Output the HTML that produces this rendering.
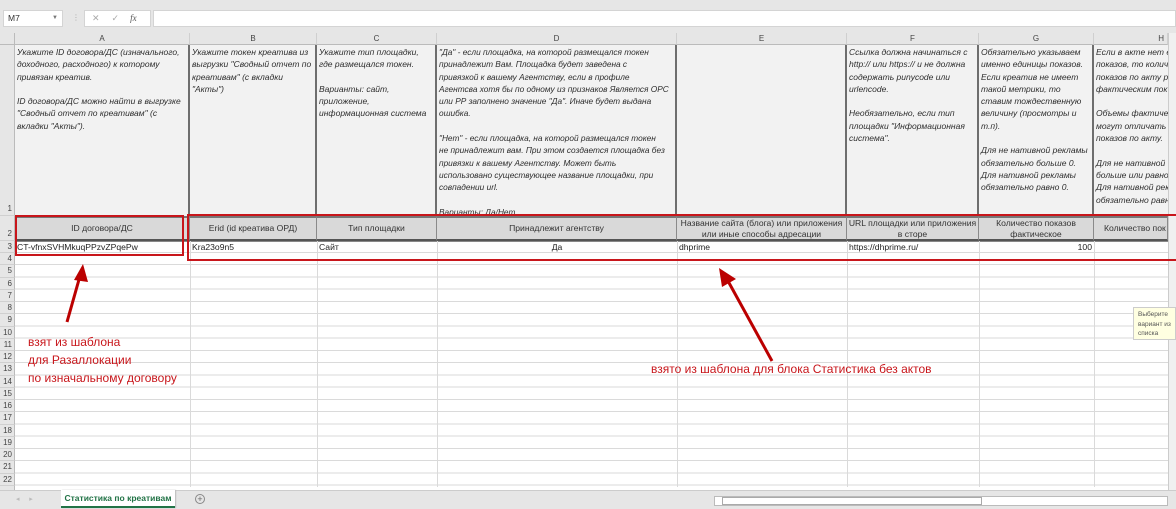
<!DOCTYPE html>
<html><head><meta charset="utf-8"><style>
*{margin:0;padding:0;box-sizing:border-box}
body{width:1176px;height:509px;overflow:hidden;background:#fff;font-family:"Liberation Sans","DejaVu Sans",sans-serif;position:relative}
.a{position:absolute}
.top{left:0;top:0;width:1176px;height:33px;background:#e6e6e6}
.box{background:#fff;border:1px solid #d4d4d4}
.ch{top:33px;height:12px;background:#e6e6e6;border-bottom:1px solid #bbb;font-size:8px;color:#444;text-align:center;line-height:12px;border-right:1px solid #cfcfcf}
.rh{left:0;width:15px;background:#e6e6e6;font-size:8px;color:#444;text-align:right;padding-right:2px;border-bottom:1px solid #d0d0d0;border-right:1px solid #bbb}
.c1{top:45px;height:171px;background:#f2f2f2;font-size:8.5px;font-style:italic;color:#2e2e2e;line-height:12.3px;padding:1px 2px;border-right:2px solid #6e6e6e;overflow:hidden;white-space:nowrap}
.c2{top:216px;height:25px;background:#d9d9d9;font-size:8.6px;color:#333;text-align:center;line-height:11px;display:flex;align-items:center;justify-content:center;border-right:1px solid #8a8a8a;border-top:2px solid #777;border-bottom:2px solid #555}
.c3{top:241px;height:12px;font-size:8.6px;color:#222;line-height:12px;padding:0 2px}
.vl{top:253px;width:1px;height:234px;background:#dadada}
.red{color:#c8161b;font-size:12px;line-height:18px}
</style></head><body>
<div class="a top"></div>
<div class="a box" style="left:3px;top:10px;width:60px;height:17px;font-size:8.5px;line-height:15px;padding-left:4px;color:#333">M7<span style="position:absolute;right:4px;font-size:6px;color:#777">▼</span></div>
<div class="a" style="left:72px;top:13px;font-size:8px;color:#aaa">⋮</div>
<div class="a box" style="left:84px;top:10px;width:67px;height:17px;font-size:9px;color:#aaa;line-height:15px"><span style="margin-left:7px">✕</span><span style="margin-left:12px">✓</span><span style="margin-left:11px;font-style:italic;font-family:'Liberation Serif',serif;color:#555">fx</span></div>
<div class="a box" style="left:153px;top:10px;width:1023px;height:17px"></div>
<div class="a" style="left:0;top:33px;width:15px;height:12px;background:#e6e6e6;border-right:1px solid #bbb;border-bottom:1px solid #bbb"></div>
<div class="a ch" style="left:15px;width:175px">A</div>
<div class="a ch" style="left:190px;width:127px">B</div>
<div class="a ch" style="left:317px;width:120px">C</div>
<div class="a ch" style="left:437px;width:240px">D</div>
<div class="a ch" style="left:677px;width:170px">E</div>
<div class="a ch" style="left:847px;width:132px">F</div>
<div class="a ch" style="left:979px;width:115px">G</div>
<div class="a ch" style="left:1094px;width:74px;text-align:right;padding-right:3px">H</div>
<div class="a" style="left:1168px;top:33px;width:8px;height:457px;background:#f0f0f0;border-left:1px solid #ccc"></div>

<div class="a c1" style="left:15px;width:175px">Укажите ID договора/ДС (изначального,<br>доходного, расходного) к которому<br>привязан креатив.<br><br>ID договора/ДС можно найти в выгрузке<br>"Сводный отчет по креативам" (с<br>вкладки "Акты").</div>
<div class="a c1" style="left:190px;width:127px">Укажите токен креатива  из<br>выгрузки "Сводный отчет по<br>креативам" (с вкладки<br>"Акты")</div>
<div class="a c1" style="left:317px;width:120px">Укажите тип площадки,<br>где размещался токен.<br><br>Варианты: сайт,<br>приложение,<br>информационная система</div>
<div class="a c1" style="left:437px;width:240px;font-size:8.3px">"Да"  -  если площадка, на которой размещался токен<br>принадлежит Вам. Площадка будет заведена с<br>привязкой к вашему Агентству, если  в профиле<br>Агентсва  хотя бы по одному из признаков  Является ОРС<br>или РР заполнено значение "Да". Иначе будет выдана<br>ошибка.<br><br>"Нет" -  если площадка, на которой размещался токен<br>не принадлежит вам. При этом создается площадка без<br>привязки к вашему Агентству. Может быть<br>использовано существующее название площадки, при<br>совпадении url.<br><br><u>Варианты: Да/Нет</u></div>
<div class="a c1" style="left:677px;width:170px"></div>
<div class="a c1" style="left:847px;width:132px">Ссылка должна начинаться с<br>http:// или https:// и не должна<br>содержать punycode или<br>urlencode.<br><br>Необязательно, если тип<br>площадки "Информационная<br>система".</div>
<div class="a c1" style="left:979px;width:115px">Обязательно указываем<br>именно единицы показов.<br>Если креатив не имеет<br>такой метрики, то<br>ставим тождественную<br>величину (просмотры и<br>т.п).<br><br>Для не нативной рекламы<br>обязательно больше 0.<br>Для нативной рекламы<br>обязательно равно 0.</div>
<div class="a c1" style="left:1094px;width:74px;border-right:none">Если в акте нет е<br>показов, то колич<br>показов по акту р<br>фактическим пок<br><br>Объемы фактиче<br>могут отличать<br>показов по акту.<br><br>Для не нативной<br>больше или равно<br>Для нативной рек<br>обязательно равн</div>

<div class="a c2" style="left:15px;width:175px">ID договора/ДС</div>
<div class="a c2" style="left:190px;width:127px">Erid (id креатива ОРД)</div>
<div class="a c2" style="left:317px;width:120px">Тип площадки</div>
<div class="a c2" style="left:437px;width:240px">Принадлежит агентству</div>
<div class="a c2" style="left:677px;width:170px">Название сайта (блога) или приложения<br>или иные способы адресации</div>
<div class="a c2" style="left:847px;width:132px">URL площадки или приложения<br>в сторе</div>
<div class="a c2" style="left:979px;width:115px">Количество показов<br>фактическое</div>
<div class="a c2" style="left:1094px;width:74px;justify-content:flex-start;padding-left:10px;white-space:nowrap;overflow:hidden">Количество пок</div>

<div class="a c3" style="left:15px;width:175px">CT-vfnxSVHMkuqPPzvZPqePw</div>
<div class="a c3" style="left:190px;width:127px">Kra23o9n5</div>
<div class="a c3" style="left:317px;width:120px">Сайт</div>
<div class="a c3" style="left:437px;width:240px;text-align:center">Да</div>
<div class="a c3" style="left:677px;width:170px">dhprime</div>
<div class="a c3" style="left:847px;width:132px">https://dhprime.ru/</div>
<div class="a c3" style="left:979px;width:115px;text-align:right">100</div>

<div class="a" style="left:15px;top:253px;width:1153px;height:234px;background:repeating-linear-gradient(#fff 0,#fff 11.25px,#dadada 11.25px,#dadada 12.25px)"></div>
<div class="a vl" style="left:190px"></div><div class="a vl" style="left:317px"></div><div class="a vl" style="left:437px"></div><div class="a vl" style="left:677px"></div><div class="a vl" style="left:847px"></div><div class="a vl" style="left:979px"></div><div class="a vl" style="left:1094px"></div>
<div class="a" style="left:15px;top:241px;width:1153px;height:12px;border-bottom:1px solid #dadada;border-top:1px solid #888"></div>
<div class="a vl" style="left:190px;top:241px;height:12px"></div><div class="a vl" style="left:317px;top:241px;height:12px"></div><div class="a vl" style="left:437px;top:241px;height:12px"></div><div class="a vl" style="left:677px;top:241px;height:12px"></div><div class="a vl" style="left:847px;top:241px;height:12px"></div><div class="a vl" style="left:979px;top:241px;height:12px"></div><div class="a vl" style="left:1094px;top:241px;height:12px"></div>

<div class="a rh" style="top:45px;height:171px;line-height:12px;padding-top:158px">1</div>
<div class="a rh" style="top:216px;height:25px;padding-top:13px">2</div>
<div class="a rh" style="top:241px;height:12px;line-height:12px">3</div>
<div class="a rh" style="top:253px;height:12.25px;line-height:12px">4</div>
<div class="a rh" style="top:265.25px;height:12.25px;line-height:12px">5</div>
<div class="a rh" style="top:277.5px;height:12.25px;line-height:12px">6</div>
<div class="a rh" style="top:289.75px;height:12.25px;line-height:12px">7</div>
<div class="a rh" style="top:302px;height:12.25px;line-height:12px">8</div>
<div class="a rh" style="top:314.25px;height:12.25px;line-height:12px">9</div>
<div class="a rh" style="top:326.5px;height:12.25px;line-height:12px">10</div>
<div class="a rh" style="top:338.75px;height:12.25px;line-height:12px">11</div>
<div class="a rh" style="top:351px;height:12.25px;line-height:12px">12</div>
<div class="a rh" style="top:363.25px;height:12.25px;line-height:12px">13</div>
<div class="a rh" style="top:375.5px;height:12.25px;line-height:12px">14</div>
<div class="a rh" style="top:387.75px;height:12.25px;line-height:12px">15</div>
<div class="a rh" style="top:400px;height:12.25px;line-height:12px">16</div>
<div class="a rh" style="top:412.25px;height:12.25px;line-height:12px">17</div>
<div class="a rh" style="top:424.5px;height:12.25px;line-height:12px">18</div>
<div class="a rh" style="top:436.75px;height:12.25px;line-height:12px">19</div>
<div class="a rh" style="top:449px;height:12.25px;line-height:12px">20</div>
<div class="a rh" style="top:461.25px;height:12.25px;line-height:12px">21</div>
<div class="a rh" style="top:473.5px;height:12.25px;line-height:12px">22</div>
<div class="a rh" style="top:485.75px;height:5px"></div>

<div class="a" style="left:0;top:490px;width:1176px;height:19px;background:#e6e6e6;border-top:1px solid #ccc"></div>
<div class="a" style="left:16px;top:495px;font-size:7px;color:#bbb">◂ &nbsp;&nbsp;&nbsp; ▸</div>
<div class="a" style="left:61px;top:490px;width:114px;height:18px;background:#fff;border-bottom:2px solid #217346;font-size:8.5px;font-weight:bold;color:#217346;text-align:center;line-height:17px;box-shadow:1px 0 1px #bbb">Статистика по креативам</div>
<div class="a" style="left:195px;top:494px;width:10px;height:10px;border:1px solid #888;border-radius:50%;font-size:9px;line-height:8px;text-align:center;color:#666">+</div>
<div class="a" style="left:714px;top:496px;width:454px;height:10px;background:#fff;border:1px solid #bbb"></div>
<div class="a" style="left:722px;top:497px;width:260px;height:8px;background:#fff;border:1px solid #aaa"></div>

<div class="a" style="left:1133px;top:307px;width:43px;height:33px;background:#ffffe1;border:1px solid #ccc;font-size:6.5px;color:#555;line-height:9.5px;padding:2px 4px;white-space:nowrap;overflow:hidden">Выберите<br>вариант из<br>списка</div>

<div class="a" style="left:15px;top:215px;width:169px;height:41px;border:2px solid #c8161b"></div>
<div class="a" style="left:187px;top:214px;width:992px;height:47px;border:2px solid #c8161b;border-right:none"></div>

<svg class="a" style="left:0;top:0" width="1176" height="509">
<line x1="67" y1="322" x2="80" y2="276" stroke="#b00" stroke-width="3"/>
<polygon points="83,264 74,280 88,282" fill="#b00"/>
<line x1="772" y1="361" x2="728" y2="281" stroke="#b00" stroke-width="3"/>
<polygon points="719,268 722,287 736,279" fill="#b00"/>
</svg>
<div class="a red" style="left:28px;top:333px">взят из шаблона<br>для Разаллокации<br>по изначальному договору</div>
<div class="a red" style="left:651px;top:360px">взято из шаблона для блока Статистика без актов</div>
</body></html>
